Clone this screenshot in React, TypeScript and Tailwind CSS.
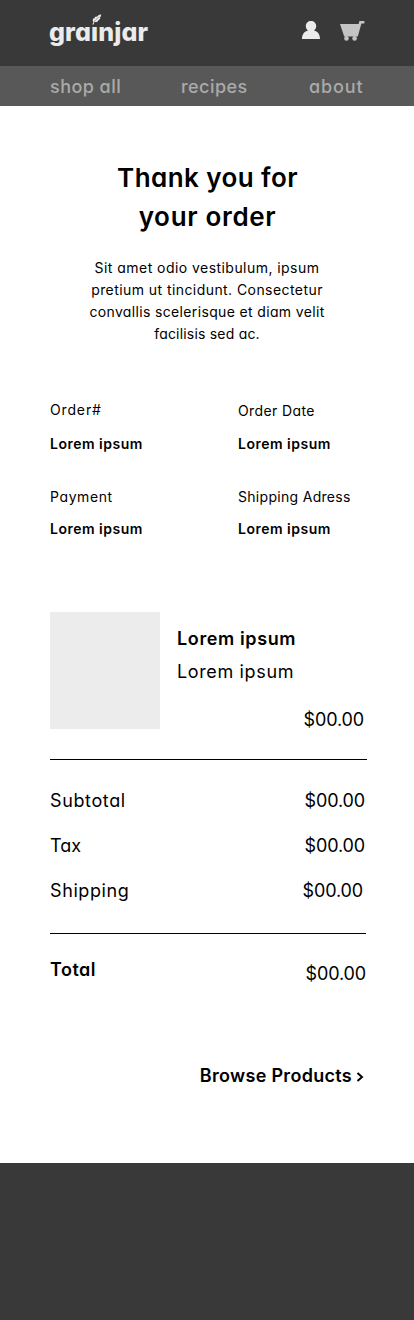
const body = "text-[18px] leading-[27px] whitespace-nowrap";
const small = "text-[14px] leading-[21px] whitespace-nowrap";

function Logo() {
  return (
    <a className="text-[25px] leading-[30px] font-extrabold tracking-[0.1px] text-[#ebebeb] whitespace-nowrap">
      gra
      <span className="relative">
        i
        <span className="absolute -left-px top-0 h-[10px] w-[9px] bg-[#393939]" />
        <svg className="absolute left-0 top-[-3px]" width="11" height="12" viewBox="0 0 11 12" fill="#ebebeb">
          <path d="M10.2 .2 C9.9 2.2 9.8 3 8.4 3.6 L9.4 3.9 C8.7 5.3 8 5.8 7 6 L7.6 6.5 C6.6 7.8 5.2 8.3 3.6 8 L2.2 10.8 L1.3 10.5 L2.4 8 C1.3 6.5 1.6 5.2 2.8 4 L3.3 4.9 C3.3 3.4 4.2 2.6 5.4 2.2 L5.7 3.2 C6.3 1.5 8.2 .8 10.2 .2Z" />
          <path d="M2.7 8.3 L7.8 2.7" stroke="#393939" strokeWidth=".4" />
        </svg>
      </span>
      njar
    </a>
  );
}

function UserIcon() {
  return (
    <svg width="18" height="18" viewBox="0 0 18 18" fill="#ebebeb" aria-label="Account">
      <path d="M9 0C12 0 14.2 2.1 14.2 5C14.2 7 13.2 8.5 12 9.6C15.6 10.6 18 13.3 18 18H0C0 13.3 2.4 10.6 6 9.6C4.8 8.5 3.8 7 3.8 5C3.8 2.1 6 0 9 0Z" />
    </svg>
  );
}

function CartIcon() {
  return (
    <svg width="25" height="20" viewBox="0 0 25 20" fill="#c4c4c4" aria-label="Cart">
      <path d="M0 3H18.6L19.4 0H24.4V2.5H21.4L17.8 15.5H4.2Z" />
      <circle cx="6.5" cy="17.4" r="2.3" />
      <circle cx="14.6" cy="17.4" r="2.3" />
    </svg>
  );
}

export default function App() {
  return (
    <div className="flex min-h-[1320px] w-[414px] flex-col bg-white font-['Inter','Noto_Sans',sans-serif] text-black [font-feature-settings:'cv11']">
      <header className="flex h-[66px] justify-between bg-[#393939] pt-[16px] pr-[49px] pl-[49px]">
        <div className="pt-px">
          <Logo />
        </div>
        <div className="flex items-start gap-5 pt-[5px]">
          <UserIcon />
          <CartIcon />
        </div>
      </header>
      <nav className={`${body} flex h-10 items-start bg-[#585858] pt-[7px] pl-[50px] font-medium text-[#aaaaaa]`}>
        <a className="w-[131px] tracking-[0.45px]">shop all</a>
        <a className="w-[128px] tracking-[0.45px]">recipes</a>
        <a className="tracking-[0.9px]">about</a>
      </nav>

      <main className="flex flex-col">
        <h1 className="mt-[52px] text-center text-[26px] leading-[39px] font-semibold">
          <span className="block pl-px tracking-[0.42px]">Thank you for</span>
          <span className="block pl-px tracking-[0.68px]">your order</span>
        </h1>
        <p className="mt-[21px] text-center text-[14px] leading-[22px] whitespace-nowrap">
          <span className="block tracking-[0.45px]">Sit amet odio vestibulum, ipsum</span>
          <span className="block tracking-[0.43px]">pretium ut tincidunt. Consectetur</span>
          <span className="block tracking-[0.35px]">convallis scelerisque et diam velit</span>
          <span className="block tracking-[0.2px]">facilisis sed ac.</span>
        </p>

        <section className="mt-[54px] grid grid-cols-[188px_1fr] pl-[50px]">
          <div className="flex flex-col">
            <span className={`${small} tracking-[0.85px]`}>Order#</span>
            <span className={`${small} mt-[13px] font-semibold tracking-[0.5px]`}>Lorem ipsum</span>
            <span className={`${small} mt-8 tracking-[0.6px]`}>Payment</span>
            <span className={`${small} mt-[11px] font-semibold tracking-[0.5px]`}>Lorem ipsum</span>
          </div>
          <div className="flex flex-col pt-px">
            <span className={`${small} tracking-[0.38px]`}>Order Date</span>
            <span className={`${small} mt-3 font-semibold tracking-[0.5px]`}>Lorem ipsum</span>
            <span className={`${small} mt-8 tracking-[0.3px]`}>Shipping Adress</span>
            <span className={`${small} mt-[11px] font-semibold tracking-[0.5px]`}>Lorem ipsum</span>
          </div>
        </section>

        <section className="mt-[73px] ml-[50px] flex h-[148px] w-[317px] border-b border-black">
          <div className="h-[117px] w-[110px] bg-[#ececec]" />
          <div className="flex flex-1 flex-col pt-[13px] pr-[3px] pl-[17px]">
            <span className={`${body} font-semibold tracking-[0.62px]`}>Lorem ipsum</span>
            <span className={`${body} mt-1.5 tracking-[0.64px]`}>Lorem ipsum</span>
            <span className={`${body} mt-[21px] self-end tracking-[-0.13px]`}>$00.00</span>
          </div>
        </section>

        <section className={`${body} ml-[50px] flex h-[174px] w-[316px] flex-col gap-[18px] border-b border-black pt-[27px]`}>
          <div className="flex justify-between pr-px">
            <span className="tracking-[0.62px]">Subtotal</span>
            <span className="tracking-[-0.13px]">$00.00</span>
          </div>
          <div className="flex justify-between pr-px">
            <span>Tax</span>
            <span className="tracking-[-0.13px]">$00.00</span>
          </div>
          <div className="flex justify-between pr-[3px]">
            <span className="tracking-[0.6px]">Shipping</span>
            <span className="tracking-[-0.13px]">$00.00</span>
          </div>
        </section>

        <div className={`${body} ml-[50px] flex w-[316px] justify-between pt-[22px]`}>
          <span className="font-semibold tracking-[0.48px]">Total</span>
          <span className="pt-1 tracking-[-0.13px]">$00.00</span>
        </div>

        <a className={`${body} mt-[75px] flex items-center gap-1 self-end pr-[50px] font-semibold tracking-[0.3px]`}>
          Browse Products
          <svg className="mt-[3px]" width="8" height="10" viewBox="0 0 8 10" fill="none" stroke="black" strokeWidth="2">
            <path d="M1.5 1L6 5L1.5 9" />
          </svg>
        </a>
      </main>
      <footer className="mt-[74px] flex-1 bg-[#393939]" />
    </div>
  );
}
